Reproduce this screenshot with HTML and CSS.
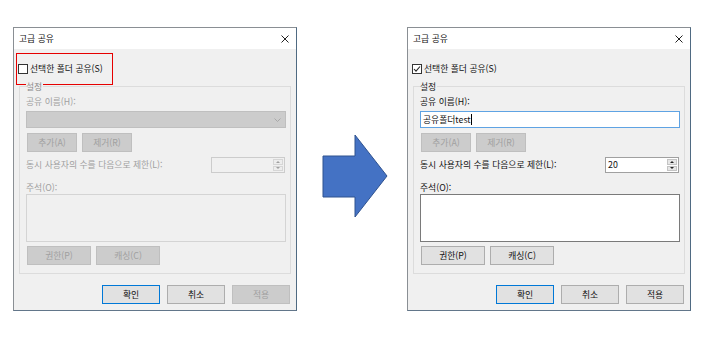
FILE: index.html
```html
<!DOCTYPE html>
<html lang="ko">
<head>
    <meta charset="UTF-8">
    <title>고급 공유</title>
    <link rel="stylesheet" href="styles.css">
</head>
<body>
    <div class="stage">
        <!-- before: sharing off -->
        <div class="dialog">
            <div class="titlebar">
                <span class="title">고급 공유</span>
                <svg class="close" width="8" height="8" viewBox="0 0 8 8"><path d="M0.5 0.5 L7.5 7.5 M7.5 0.5 L0.5 7.5"/></svg>
            </div>
            <div class="dialog-body">
                <div class="share-row marked">
                    <span class="checkbox"></span>
                    <span>선택한 폴더 공유(S)</span>
                </div>

                <div class="group disabled">
                    <div class="group-title">설정</div>
                    <div class="field-label">공유 이름(H):</div>
                    <div class="combo">
                        <svg width="7" height="4" viewBox="0 0 7 4"><path d="M0.5 0.5 L3.5 3.5 L6.5 0.5"/></svg>
                    </div>
                    <div class="btn-row">
                        <button class="btn btn-small" disabled>추가(A)</button>
                        <button class="btn btn-small" disabled>제거(R)</button>
                    </div>
                    <div class="limit-row">
                        <span>동시 사용자의 수를 다음으로 제한(L):</span>
                        <div class="spin">
                            <span class="spin-value"></span>
                            <span class="spin-btns"><span class="spin-up"></span><span class="spin-down"></span></span>
                        </div>
                    </div>
                    <div class="field-label memo-label">주석(O):</div>
                    <div class="memo"></div>
                    <div class="btn-row btn-row-low">
                        <button class="btn btn-wide" disabled>권한(P)</button>
                        <button class="btn btn-wide" disabled>캐싱(C)</button>
                    </div>
                </div>

                <div class="footer">
                    <button class="btn btn-default">확인</button>
                    <button class="btn">취소</button>
                    <button class="btn" disabled>적용</button>
                </div>
            </div>
        </div>

        <svg class="arrow" width="66" height="84" viewBox="0 0 66 84">
            <polygon points="1,22 33,22 33,1 65,42 33,83 33,63 1,63"/>
        </svg>

        <!-- after: sharing on -->
        <div class="dialog">
            <div class="titlebar">
                <span class="title">고급 공유</span>
                <svg class="close" width="8" height="8" viewBox="0 0 8 8"><path d="M0.5 0.5 L7.5 7.5 M7.5 0.5 L0.5 7.5"/></svg>
            </div>
            <div class="dialog-body">
                <div class="share-row">
                    <span class="checkbox">
                        <svg width="8" height="8" viewBox="0 0 8 8"><path d="M1 4 L3 6.2 L7 1.5"/></svg>
                    </span>
                    <span>선택한 폴더 공유(S)</span>
                </div>

                <div class="group">
                    <div class="group-title">설정</div>
                    <div class="field-label">공유 이름(H):</div>
                    <div class="textbox">공유폴더test<span class="caret"></span></div>
                    <div class="btn-row">
                        <button class="btn btn-small" disabled>추가(A)</button>
                        <button class="btn btn-small" disabled>제거(R)</button>
                    </div>
                    <div class="limit-row">
                        <span>동시 사용자의 수를 다음으로 제한(L):</span>
                        <div class="spin">
                            <span class="spin-value">20</span>
                            <span class="spin-btns"><span class="spin-up"></span><span class="spin-down"></span></span>
                        </div>
                    </div>
                    <div class="field-label memo-label">주석(O):</div>
                    <div class="memo"></div>
                    <div class="btn-row btn-row-low">
                        <button class="btn btn-wide">권한(P)</button>
                        <button class="btn btn-wide">캐싱(C)</button>
                    </div>
                </div>

                <div class="footer">
                    <button class="btn btn-default">확인</button>
                    <button class="btn">취소</button>
                    <button class="btn">적용</button>
                </div>
            </div>
        </div>
    </div>
</body>
</html>
```

FILE: styles.css
```css
* {
    margin: 0;
    padding: 0;
    box-sizing: border-box;
}

body {
    background: #fff;
    font-family: "Noto Sans CJK KR", "Noto Sans", sans-serif;
    font-size: 8.8px;
    line-height: 12px;
    color: #111;
}

.stage {
    display: flex;
    align-items: flex-start;
    padding: 27px 0 0 13px;
}

.dialog {
    width: 284px;
    border: 1px solid #8a8f94;
    border-right-color: #4f6a82;
    border-bottom-color: #62768a;
    background: #f0f0f0;
}

.titlebar {
    height: 21px;
    background: #fff;
    display: flex;
    align-items: center;
    justify-content: space-between;
    padding: 0 7px 0 5px;
}

.close path {
    stroke: #222;
    stroke-width: 1;
    fill: none;
}

.dialog-body {
    padding: 4px 0 6px;
}

.share-row {
    display: flex;
    align-items: center;
    gap: 2px;
    width: 97px;
    height: 32px;
    margin-left: 2px;
    padding-left: 1px;
    border: 1px solid transparent;
}

.share-row.marked {
    border-color: #e60000;
}

.checkbox {
    width: 10px;
    height: 10px;
    border: 1px solid #333;
    background: #fff;
    display: flex;
    align-items: center;
    justify-content: center;
}

.checkbox path {
    stroke: #222;
    stroke-width: 1.1;
    fill: none;
}

.group {
    margin: 1px 5px 0;
    border: 1px solid #dcdcdc;
    padding: 0 4px 8px 6px;
}

.group-title {
    width: fit-content;
    margin-top: -6px;
    padding: 0 1px 0 0;
    background: #f0f0f0;
    color: #1a1a1a;
}

.field-label {
    margin-top: 3px;
}

.memo-label {
    margin-top: 9px;
}

.textbox {
    height: 17px;
    margin-top: 3px;
    border: 1px solid #5fa3e3;
    background: #fff;
    padding-left: 2px;
    display: flex;
    align-items: center;
}

.caret {
    width: 1px;
    height: 11px;
    background: #000;
}

.combo {
    height: 17px;
    margin-top: 3px;
    border: 1px solid #bfbfbf;
    background: #cccccc;
    display: flex;
    align-items: center;
    justify-content: flex-end;
    padding-right: 4px;
}

.combo path {
    stroke: #a8a8a8;
    stroke-width: 1;
    fill: none;
}

.btn-row {
    display: flex;
    gap: 5px;
    margin-top: 5px;
    padding-left: 1px;
}

.btn-row-low {
    margin-top: 4px;
}

.btn {
    font: inherit;
    height: 19px;
    width: 58px;
    border: 1px solid #adadad;
    background: #e1e1e1;
    color: #111;
    display: flex;
    align-items: center;
    justify-content: center;
}

.btn:disabled {
    background: #cccccc;
    border-color: #bfbfbf;
    color: #a0a0a0;
}

.btn-small {
    width: 50px;
}

.btn-wide {
    width: 64px;
}

.btn-default {
    border-color: #0078d7;
}

.limit-row {
    display: flex;
    align-items: center;
    justify-content: space-between;
    margin-top: 5px;
    padding-right: 1px;
}

.spin {
    display: flex;
    width: 74px;
    height: 16px;
    border: 1px solid #a0a0a0;
    background: #fff;
}

.spin-value {
    flex: 1;
    padding-left: 2px;
    line-height: 14px;
}

.spin-btns {
    width: 12px;
    display: flex;
    flex-direction: column;
    gap: 1px;
    padding: 1px;
}

.spin-up,
.spin-down {
    flex: 1;
    background: #e6e6e6;
    border: 1px solid #c4c4c4;
    display: flex;
    align-items: center;
    justify-content: center;
}

.spin-up::after {
    content: "";
    border-left: 2px solid transparent;
    border-right: 2px solid transparent;
    border-bottom: 2px solid #222;
}

.spin-down::after {
    content: "";
    border-left: 2px solid transparent;
    border-right: 2px solid transparent;
    border-top: 2px solid #222;
}

.memo {
    height: 48px;
    border: 1px solid #7a7a7a;
    background: #fff;
}

.footer {
    display: flex;
    justify-content: flex-end;
    gap: 7px;
    margin-top: 11px;
    padding-right: 6px;
}

/* greyed-out state of the left dialog */
.group.disabled {
    color: #a0a0a0;
}

.group.disabled .group-title {
    color: #8c8c8c;
}

.group.disabled .spin {
    border-color: #cccccc;
    background: #f0f0f0;
}

.group.disabled .spin-up,
.group.disabled .spin-down {
    background: #ededed;
    border-color: #d6d6d6;
}

.group.disabled .spin-up::after {
    border-bottom-color: #a0a0a0;
}

.group.disabled .spin-down::after {
    border-top-color: #a0a0a0;
}

.group.disabled .memo {
    border-color: #d4d4d4;
    background: #f0f0f0;
}

.arrow {
    margin: 107px 19px 0 25px;
}

.arrow polygon {
    fill: #4472c4;
    stroke: #2f528f;
    stroke-width: 1;
}
```
